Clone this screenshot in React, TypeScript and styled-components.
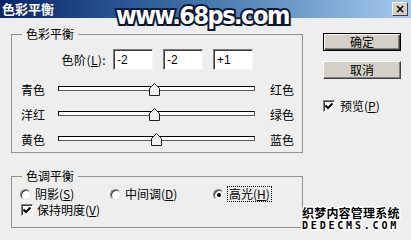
import React from "react";
import styled, { createGlobalStyle } from "styled-components";

const GlobalStyle = createGlobalStyle`
  html, body {
    margin: 0;
    padding: 0;
    background: #eeeeee;
  }
  body {
    font-family: "Liberation Sans", "Noto Sans CJK SC", sans-serif;
    font-size: 12px;
    color: #000;
  }
`;

const Window = styled.div`
  position: relative;
  width: 411px;
  height: 240px;
  overflow: hidden;
  background: #eeeeee;
`;

const TitleBar = styled.div`
  height: 18px;
  display: flex;
  align-items: center;
  justify-content: space-between;
  padding: 0 3px 0 2px;
  background: linear-gradient(90deg, #0a246a 0%, #3a6ea5 45%, #a6caf0 100%);
`;

const Title = styled.span`
  font-family: "Noto Sans CJK SC", sans-serif;
  font-weight: 700;
  font-size: 13px;
  line-height: 18px;
  color: #fff;
`;

const CloseButton = styled.div`
  width: 16px;
  height: 14px;
  box-sizing: border-box;
  display: flex;
  align-items: center;
  justify-content: center;
  background: #d4d0c8;
  border: 1px solid;
  border-color: #fff #404040 #404040 #fff;
  font-family: "DejaVu Sans", sans-serif;
  font-weight: 700;
  font-size: 12px;
  line-height: 1;
`;

const Body = styled.div`
  display: flex;
  gap: 20px;
  padding: 16px 0 0 11px;
`;

const MainColumn = styled.div`
  width: 292px;
  display: flex;
  flex-direction: column;
  gap: 23px;
`;

/* group box: the caption sits over the top border line */
const Group = styled.section<{ $top: number; $bottom: number }>`
  position: relative;
  box-sizing: border-box;
  border: 1px solid #929292;
  padding: ${(p) => `${p.$top}px 0 ${p.$bottom}px 9px`};
`;

const Caption = styled.span`
  position: absolute;
  left: 10px;
  top: -8px;
  padding: 0 4px;
  background: #eeeeee;
  font-family: "Noto Sans CJK SC", sans-serif;
  font-size: 12px;
  line-height: 14px;
`;

const LevelsRow = styled.div`
  height: 21px;
  display: flex;
  align-items: center;
  margin-bottom: 7px;
`;

const LevelsLabel = styled.label`
  width: 85px;
  margin-right: 7px;
  text-align: right;
  font-family: "Noto Sans CJK SC", sans-serif;
  line-height: 14px;
  letter-spacing: 0.4px;
`;

const Fields = styled.div`
  display: flex;
  gap: 10px;
`;

const Field = styled.input`
  width: 40px;
  height: 21px;
  box-sizing: border-box;
  margin: 0;
  padding: 0 0 0 3px;
  background: #fff;
  border: 1px solid;
  border-color: #7a7a7a #f4f4f4 #f4f4f4 #7a7a7a;
  box-shadow: inset 1px 1px #404040;
  font-family: "Liberation Sans", sans-serif;
  font-size: 12px;
  color: #000;
  outline: none;
`;

const SliderRow = styled.div`
  height: 25px;
  display: grid;
  grid-template-columns: 37px 197px auto;
  align-items: center;
`;

const Side = styled.span<{ $right?: boolean }>`
  font-family: "Noto Sans CJK SC", sans-serif;
  line-height: 14px;
  margin-left: ${(p) => (p.$right ? "15px" : "0")};
`;

const Track = styled.div`
  position: relative;
  height: 5px;
  box-sizing: border-box;
  background: #fff;
  border: 1px solid;
  border-color: #000 #5a5a5a #5a5a5a #000;
  margin-top: -2px;
`;

const Thumb = styled.svg`
  position: absolute;
  top: -4px;
  width: 11px;
  height: 13px;
  margin-left: -6px;
`;

const OptionRow = styled.div`
  display: grid;
  grid-template-columns: 90px 103px auto;
  height: 14px;
  align-items: center;
  margin-left: -1px;
`;

const Option = styled.label`
  display: flex;
  align-items: center;
  gap: 4px;
  font-family: "Noto Sans CJK SC", sans-serif;
  line-height: 14px;
`;

const Radio = styled.span<{ $checked?: boolean }>`
  position: relative;
  width: 11px;
  height: 11px;
  box-sizing: border-box;
  border-radius: 50%;
  background: #fff;
  border: 1px solid;
  border-color: #808080 #e6e6e6 #e6e6e6 #808080;
  box-shadow: inset 1px 1px #404040;
  &::after {
    content: "";
    display: ${(p) => (p.$checked ? "block" : "none")};
    position: absolute;
    left: 3px;
    top: 3px;
    width: 4px;
    height: 4px;
    border-radius: 50%;
    background: #000;
  }
`;

const Text = styled.span<{ $focused?: boolean }>`
  outline: ${(p) => (p.$focused ? "1px dotted #000" : "none")};
  padding: ${(p) => (p.$focused ? "0 1px" : "0")};
`;

const CheckRow = styled.label<{ $gap: number }>`
  display: flex;
  align-items: center;
  gap: ${(p) => p.$gap}px;
  height: 14px;
  margin-top: 2px;
  font-family: "Noto Sans CJK SC", sans-serif;
  line-height: 14px;
`;

const Box = styled.span`
  width: 12px;
  height: 12px;
  box-sizing: border-box;
  display: flex;
  align-items: center;
  justify-content: center;
  background: #fff;
  border: 1px solid;
  border-color: #808080 #f4f4f4 #f4f4f4 #808080;
  box-shadow: inset 1px 1px #404040;
`;

const SideColumn = styled.div`
  width: 78px;
  margin-top: -1px;
  display: flex;
  flex-direction: column;
`;

const Button = styled.button<{ $default?: boolean }>`
  width: 78px;
  height: 18px;
  margin: 0 0 10px;
  padding: 0;
  box-sizing: border-box;
  background: #d4d0c8;
  font-family: "Noto Sans CJK SC", sans-serif;
  font-size: 12px;
  line-height: 1;
  color: #000;
  border: 1px solid;
  border-color: ${(p) =>
    p.$default ? "#000" : "#fff #404040 #404040 #fff"};
  box-shadow: ${(p) =>
    p.$default
      ? "inset 1px 1px #fff, inset -1px -1px #404040, inset -2px -2px #808080"
      : "inset -1px -1px #808080"};
`;

const PreviewRow = styled(CheckRow)`
  margin-top: 10px;
`;

const U = styled.span`
  text-decoration: underline;
  text-underline-offset: 1px;
`;

const SiteMark = styled.div`
  position: absolute;
  left: 116px;
  top: 1px;
  font-family: "DejaVu Sans", sans-serif;
  font-stretch: condensed;
  font-weight: 700;
  font-size: 25px;
  letter-spacing: -1.5px;
  line-height: 30px;
  color: #fff;
  -webkit-text-stroke: 4px #121a3c;
  paint-order: stroke fill;
  text-shadow: 1px 1px 2px rgba(0, 0, 0, 0.4);
`;

const CmsMark = styled.div`
  position: absolute;
  left: 302px;
  top: 206px;
  display: flex;
  flex-direction: column;
  gap: 1px;
  color: #000;
  -webkit-text-stroke: 3px #fff;
  paint-order: stroke fill;
  font-weight: 700;
`;

const CmsName = styled.span`
  font-family: "Noto Sans CJK SC", sans-serif;
  font-size: 12px;
  line-height: 14px;
  letter-spacing: 0.2px;
`;

const CmsDomain = styled.span`
  font-family: "DejaVu Sans Mono", monospace;
  font-size: 10px;
  line-height: 10px;
  letter-spacing: 2.8px;
`;

const sliders = [
  { left: "青色", right: "红色", value: -2 },
  { left: "洋红", right: "绿色", value: -2 },
  { left: "黄色", right: "蓝色", value: 1 },
];

function Check() {
  return (
    <svg width="8" height="8" viewBox="0 0 8 8">
      <polyline
        points="0.5,3.5 3,6 7.5,1.5"
        fill="none"
        stroke="#000"
        strokeWidth="2"
      />
    </svg>
  );
}

export default function App(): React.ReactElement {
  return (
    <>
      <GlobalStyle />
      <Window>
        <TitleBar>
          <Title>色彩平衡</Title>
          <CloseButton>×</CloseButton>
        </TitleBar>
        <Body>
          <MainColumn>
            <Group $top={14} $bottom={0}>
              <Caption>色彩平衡</Caption>
              <LevelsRow>
                <LevelsLabel>
                  色阶(<U>L</U>):
                </LevelsLabel>
                <Fields>
                  <Field defaultValue="-2" readOnly />
                  <Field defaultValue="-2" readOnly />
                  <Field defaultValue="+1" readOnly />
                </Fields>
              </LevelsRow>
              {sliders.map((s) => (
                <SliderRow key={s.left}>
                  <Side>{s.left}</Side>
                  <Track>
                    <Thumb
                      viewBox="0 0 11 13"
                      style={{ left: `${(s.value + 100) / 2}%` }}
                    >
                      <polygon
                        points="5.5,0.5 10.5,5.5 10.5,12.5 0.5,12.5 0.5,5.5"
                        fill="#f2f2f2"
                        stroke="#1e1e1e"
                      />
                    </Thumb>
                  </Track>
                  <Side $right>{s.right}</Side>
                </SliderRow>
              ))}
            </Group>
            <Group $top={10} $bottom={10}>
              <Caption>色调平衡</Caption>
              <OptionRow>
                <Option>
                  <Radio />
                  <Text>
                    阴影(<U>S</U>)
                  </Text>
                </Option>
                <Option>
                  <Radio />
                  <Text>
                    中间调(<U>D</U>)
                  </Text>
                </Option>
                <Option>
                  <Radio $checked />
                  <Text $focused>
                    高光(<U>H</U>)
                  </Text>
                </Option>
              </OptionRow>
              <CheckRow $gap={4}>
                <Box>
                  <Check />
                </Box>
                <Text>
                  保持明度(<U>V</U>)
                </Text>
              </CheckRow>
            </Group>
          </MainColumn>
          <SideColumn>
            <Button $default>确定</Button>
            <Button>取消</Button>
            <PreviewRow $gap={5}>
              <Box>
                <Check />
              </Box>
              <Text>
                预览(<U>P</U>)
              </Text>
            </PreviewRow>
          </SideColumn>
        </Body>
        <SiteMark>www.68ps.com</SiteMark>
        <CmsMark>
          <CmsName>织梦内容管理系统</CmsName>
          <CmsDomain>DEDECMS.COM</CmsDomain>
        </CmsMark>
      </Window>
    </>
  );
}
